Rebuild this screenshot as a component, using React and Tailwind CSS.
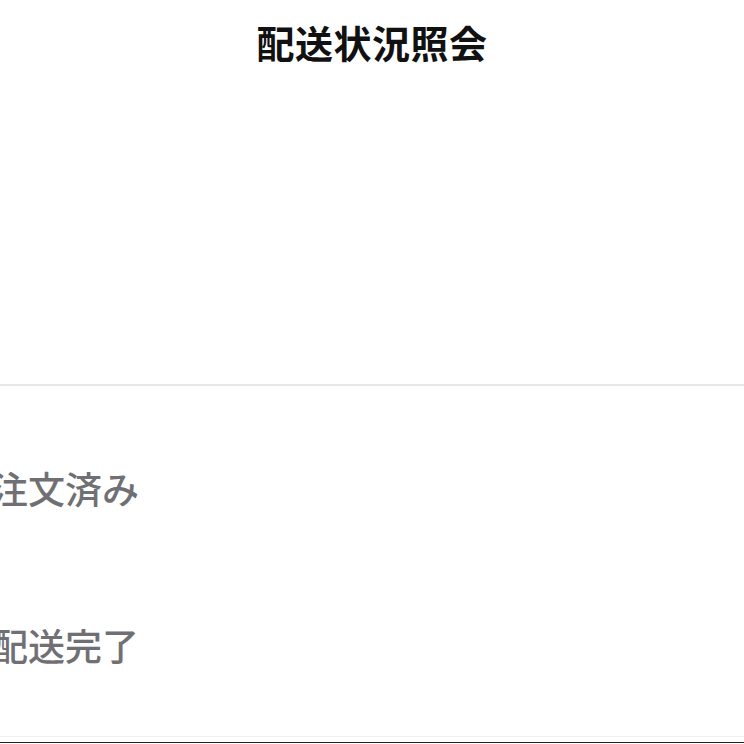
export default function App() {
  const steps = ["注文済み", "配送完了"];

  return (
    <div
      className="h-[744px] w-[744px] overflow-hidden bg-white"
      style={{ fontFamily: '"Noto Sans CJK JP", "Noto Sans", sans-serif' }}
    >
      {/* Title */}
      <div className="flex h-[384px] justify-center pt-[18px]">
        <h1 className="text-[38px] font-bold leading-[48px] tracking-[0.5px] text-[#111111]">
          配送状況照会
        </h1>
      </div>

      {/* Status list */}
      <div className="border-t-2 border-[#e8e8e8] pt-[24px]">
        {steps.map((step) => (
          <div key={step} className="-ml-[9px] flex h-[157px] items-center">
            <span className="text-[37px] font-medium leading-none text-[#707074]">
              {step}
            </span>
          </div>
        ))}
        <div className="mt-[12px] border-t border-[#f0f0f0]" />
        <div className="mt-[5px] border-t border-[#222222]" />
      </div>
    </div>
  );
}
